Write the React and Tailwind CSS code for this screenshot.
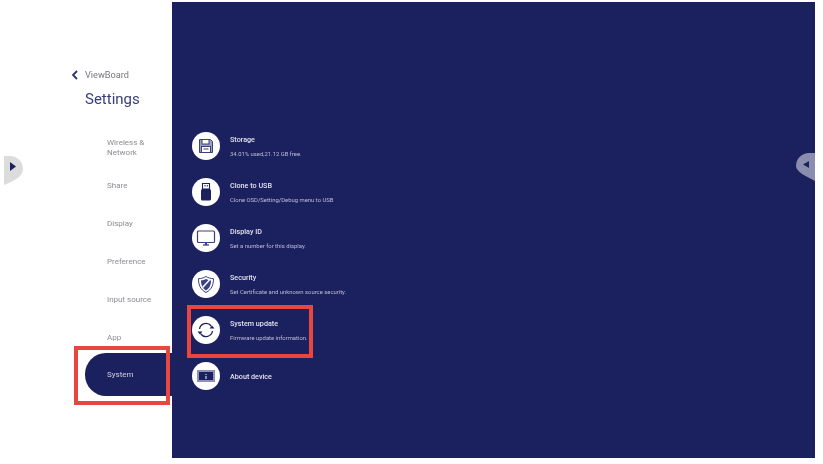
const menu = ["Wireless & Network", "Share", "Display", "Preference", "Input source", "App"];

const FloppyIcon = () => (
  <svg width="16" height="16" viewBox="0 0 16 16" fill="none" stroke="#3a4080" strokeWidth="1">
    <path d="M1.500 1.500h11l2 2v11h-13z" fill="#9a9dbb" />
    <rect x="4" y="1.500" width="7" height="4.500" fill="#fff" />
    <rect x="3.500" y="8.500" width="9" height="6" fill="#fff" />
    <path d="M5.500 11h5" />
  </svg>
);

const UsbIcon = () => (
  <svg width="18" height="20" viewBox="0 0 18 20">
    <path d="M5.500 1.500h7V7h-7z" fill="none" stroke="#1b205e" strokeWidth="1.100" />
    <path d="M7.500 3h1v1.500h-1zM9.800 3h1v1.500h-1z" fill="#1b205e" />
    <rect x="4" y="7" width="10" height="11.500" rx="1.500" fill="#1b205e" />
  </svg>
);

const MonitorIcon = () => (
  <svg width="20" height="18" viewBox="0 0 20 18" fill="none">
    <rect x="1.500" y="2" width="17" height="11.500" rx="1" fill="#fff" stroke="#3a4080" strokeWidth="1.200" />
    <path d="M7 16h6" stroke="#3a4080" strokeWidth="1.300" />
    <path d="M9 13.500h2V16H9z" fill="#3a4080" />
  </svg>
);

const ShieldIcon = () => (
  <svg width="18" height="19" viewBox="0 0 18 19" fill="none">
    <path d="M9 1.500c2 1.300 4.500 2 7.500 2.200 0 6-1.700 10.800-7.500 13.800C3.200 14.500 1.500 9.700 1.500 3.700 4.500 3.500 7 2.800 9 1.500z" stroke="#3a4080" strokeWidth="1" />
    <path d="M9 4c1.500.8 3.200 1.300 5 1.500 0 4-1.200 7.700-5 10-3.800-2.300-5-6-5-10 1.800-.2 3.500-.7 5-1.500z" fill="#3a4080" />
    <path d="M5.500 12.500 12.500 5" stroke="#fff" strokeWidth="1.500" />
  </svg>
);

const SyncIcon = () => (
  <svg width="20" height="20" viewBox="0 0 20 20" fill="none" stroke="#1b205e" strokeWidth="1.300">
    <path d="M3.500 9A6.600 6.600 0 0 1 15.200 6" />
    <path d="M16.500 11A6.600 6.600 0 0 1 4.800 14" />
    <path d="M13.500 8.500h5L16 5.500z" fill="#1b205e" stroke="none" />
    <path d="M6.500 11.500h-5L4 14.500z" fill="#1b205e" stroke="none" />
  </svg>
);

const InfoIcon = () => (
  <svg width="20" height="16" viewBox="0 0 20 16">
    <rect x="1" y="2" width="18" height="12" fill="#8f92b4" />
    <rect x="3" y="4" width="14" height="8" fill="#1b205e" />
    <path d="M9.500 6h1v1h-1zM9.500 8h1v3h-1z" fill="#fff" />
  </svg>
);

const items = [
  { title: "Storage", desc: "34.01% used,21.12 GB free.", icon: <FloppyIcon /> },
  { title: "Clone to USB", desc: "Clone OSD/Setting/Debug menu to USB", icon: <UsbIcon /> },
  { title: "Display ID", desc: "Set a number for this display.", icon: <MonitorIcon /> },
  { title: "Security", desc: "Set Certificate and unknown source security.", icon: <ShieldIcon /> },
  { title: "System update", desc: "Firmware update information.", icon: <SyncIcon /> },
  { title: "About device", icon: <InfoIcon /> },
];

export default function App() {
  return (
    <div className="relative w-[823px] h-[464px] bg-white overflow-hidden font-['Roboto',sans-serif] blur-[0.5px]">
      <div className="flex h-[456px] mt-[2px] w-[815px]">
        {/* sidebar */}
        <div className="w-[172px] shrink-0 pt-[66px]">
          <div className="flex items-center h-[14px] pl-[72px] gap-[7px]">
            <svg width="6" height="10" viewBox="0 0 6 10" fill="none" stroke="#2a3070" strokeWidth="1.800">
              <path d="M5 1 1 5l4 4" />
            </svg>
            <span className="text-[9.200px] text-[#77777f]">ViewBoard</span>
          </div>
          <div className="pl-[85px] mt-[5px] h-[24px] leading-[24px] text-[15px] text-[#3a4077]">Settings</div>
          <div className="mt-[18px] flex flex-col">
            {menu.map((label) => (
              <div key={label} className="h-[38px] pl-[107px] pr-[20px] flex items-center text-[8px] leading-[10px] text-[#8c8c93]">
                {label}
              </div>
            ))}
            <div className="h-[43px] -mt-[4px] ml-[85px] pl-[22px] flex items-center rounded-l-[21px] bg-[#1b205e] text-[8px] text-[#cfd0e0]">
              System
            </div>
          </div>
        </div>

        {/* panel */}
        <div className="flex-1 bg-[#1b205e] pt-[130px] pl-[20px] flex flex-col gap-[18px]">
          {items.map((item) => (
            <div key={item.title} className="flex items-center h-[28px] gap-[10px]">
              <div className="w-[28px] h-[28px] rounded-full bg-white flex items-center justify-center shrink-0">
                {item.icon}
              </div>
              <div className="flex flex-col gap-[6px] pt-[1.500px]">
                <div className="text-[7.200px] leading-[9px] font-medium text-[#e2e3ee]">{item.title}</div>
                {item.desc && <div className="text-[5.900px] leading-[8px] text-[#bcbed6]">{item.desc}</div>}
              </div>
            </div>
          ))}
        </div>
      </div>

      {/* side handles */}
      <svg className="absolute left-[4px] top-[155px]" width="20" height="31" viewBox="0 0 20 31">
        <path d="M0 1h6a13 13 0 0 1 13 13c0 7-7 11-19 16z" fill="#dcdcdc" />
        <path d="M6 7l6 4.500-6 4.500z" fill="#1b205e" />
      </svg>
      <svg className="absolute left-[795px] top-[153px]" width="20" height="30" viewBox="0 0 20 30">
        <path d="M20 0h-6A13 13 0 0 0 1 13c0 5 7 9 19 15z" fill="#8a8dae" />
        <path d="M14 8l-6 3.500 6 3.500z" fill="#1b205e" />
      </svg>

      {/* annotation boxes */}
      <div className="absolute left-[74px] top-[346px] w-[96px] h-[59px] border-[4px] border-[#e8473f]" />
      <div className="absolute left-[187px] top-[305px] w-[126px] h-[53px] border-[4px] border-[#e8473f]" />
    </div>
  );
}
